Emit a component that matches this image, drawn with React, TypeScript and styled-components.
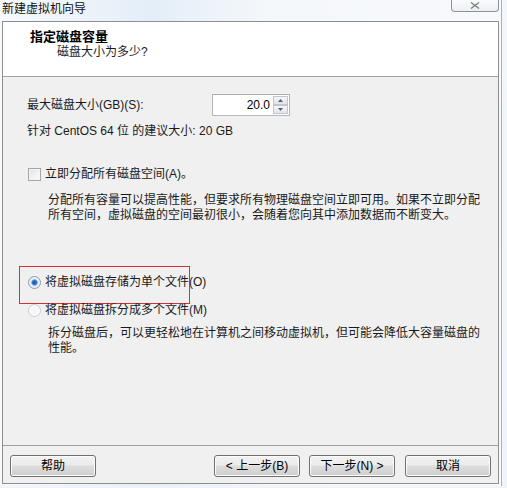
import React from "react";
import styled, { createGlobalStyle } from "styled-components";

const FONT = `"Liberation Sans", "Noto Sans CJK SC", sans-serif`;

const Global = createGlobalStyle`
  html, body { margin: 0; padding: 0; }
  body {
    background: linear-gradient(180deg, #f3f7fb 0%, #eef4fa 100%);
    font-family: ${FONT};
    font-size: 12px;
    color: #1a1a1a;
    width: 507px;
    height: 488px;
    overflow: hidden;
  }
`;

const Window = styled.div`
  width: 502px;
  height: 486px;
  display: flex;
  flex-direction: column;
  border-right: 1px solid #a9b0b8;
  box-sizing: border-box;
  background: linear-gradient(90deg, #f7f9fc 0%, #e4eef8 30%, #f5f8fb 55%, #f7f9fc 100%);
`;

const TitleBar = styled.div`
  height: 21px;
  display: flex;
  align-items: flex-start;
  justify-content: space-between;
  padding-left: 2px;
  box-sizing: border-box;
`;

const TitleText = styled.span`
  font-family: "Noto Sans CJK SC", sans-serif;
  font-size: 12px;
  line-height: 15px;
  color: #111;
`;

const CloseButton = styled.div`
  width: 46px;
  height: 11px;
  margin-right: 2px;
  border: 1px solid #8d939a;
  border-top: none;
  border-radius: 0 0 4px 4px;
  background: linear-gradient(180deg, #fbfbfb, #eceff2);
  display: flex;
  align-items: center;
  justify-content: center;
`;

const Frame = styled.div`
  flex: 1;
  margin: 0 2px 2px 2px;
  border: 1px solid #8e8f8f;
  display: flex;
  flex-direction: column;
  background: #f0f0f0;
`;

const Header = styled.div`
  height: 55px;
  background: #fff;
  border-bottom: 1px solid #a0a0a0;
  box-sizing: border-box;
  padding: 6px 0 0 27px;
  display: flex;
  flex-direction: column;
  font-family: "Noto Sans CJK SC", sans-serif;
`;

const HeaderTitle = styled.div`
  font-size: 13px;
  font-weight: bold;
  line-height: 16px;
  color: #000;
`;

const HeaderSub = styled.div`
  font-family: ${FONT};
  font-size: 12px;
  line-height: 15px;
  padding-left: 27px;
  margin-top: 1px;
`;

const Body = styled.div`
  flex: 1;
  padding: 17px 0 0 24px;
  display: flex;
  flex-direction: column;
`;

const SizeRow = styled.div`
  display: flex;
  align-items: center;
  height: 22px;
  width: 263px;
  justify-content: space-between;
`;

const Label = styled.span`
  line-height: 15px;
`;

const SpinBox = styled.div`
  width: 78px;
  height: 22px;
  box-sizing: border-box;
  border: 1px solid #b5b8bd;
  border-top-color: #abadb3;
  background: #fff;
  display: flex;
  align-items: stretch;
`;

const SpinValue = styled.div`
  flex: 1;
  text-align: right;
  padding-right: 3px;
  line-height: 20px;
  font-size: 12px;
  color: #000;
`;

const SpinButtons = styled.div`
  width: 15px;
  display: flex;
  flex-direction: column;
  margin: 1px 1px 1px 0;
`;

const SpinButton = styled.div`
  flex: 1;
  border: 1px solid #c2c6cc;
  background: linear-gradient(180deg, #f6f6f6, #e2e4e7);
  display: flex;
  align-items: center;
  justify-content: center;
`;

const Recommend = styled.div`
  line-height: 15px;
  margin-top: 8px;
`;

const OptionRow = styled.div<{ $top: number }>`
  position: relative;
  display: flex;
  align-items: center;
  gap: 4px;
  margin-top: ${(p) => p.$top}px;
  line-height: 15px;
`;

const CheckBox = styled.div`
  width: 11px;
  height: 11px;
  border: 1px solid #a6a6a6;
  background: linear-gradient(135deg, #e2e2e2, #fdfdfd);
  box-shadow: inset 0 0 0 1px #f4f4f4;
  margin-left: 1px;
`;

const Radio = styled.div<{ $checked?: boolean }>`
  width: 11px;
  height: 11px;
  border-radius: 50%;
  border: 1px solid ${(p) => (p.$checked ? "#8a99ad" : "#c9ccd0")};
  background: ${(p) =>
    p.$checked
      ? "radial-gradient(circle, #1c4f94 0, #3d83d4 2.5px, #dde9f5 3.5px, #f4f7fa 6px)"
      : "radial-gradient(circle, #f4f4f4 0, #fbfbfb 6px)"};
  margin-left: 1px;
`;

const Desc = styled.div<{ $top: number }>`
  width: 436px;
  padding-left: 21px;
  line-height: 15px;
  margin-top: ${(p) => p.$top}px;
`;

const Annotation = styled.div`
  position: absolute;
  left: -8px;
  top: -9px;
  width: 169px;
  height: 36px;
  border: 1px solid #d8303a;
  pointer-events: none;
`;

const Footer = styled.div`
  height: 38px;
  border-top: 1px solid #a0a0a0;
  box-sizing: border-box;
  display: flex;
  align-items: flex-start;
  padding: 9px 7px 0 7px;
`;

const Button = styled.button<{ $gap?: number }>`
  width: 86px;
  height: 22px;
  margin-left: ${(p) => p.$gap ?? 0}px;
  border: 1px solid #707070;
  border-radius: 3px;
  background: linear-gradient(180deg, #f2f2f2 0%, #ebebeb 45%, #dddddd 50%, #cfcfcf 100%);
  box-shadow: inset 0 0 0 1px #fcfcfc;
  font-family: ${FONT};
  font-size: 12px;
  line-height: 18px;
  color: #000;
  padding: 0;
`;

const Spacer = styled.div`
  flex: 1;
`;

export default function App() {
  return (
    <>
      <Global />
      <Window>
        <TitleBar>
          <TitleText>新建虚拟机向导</TitleText>
          <CloseButton>
            <svg width="10" height="7" viewBox="0 0 10 7">
              <path d="M1 0.5 L9 6.5 M9 0.5 L1 6.5" stroke="#7d7d7d" strokeWidth="1.3" fill="none" />
            </svg>
          </CloseButton>
        </TitleBar>
        <Frame>
          <Header>
            <HeaderTitle>指定磁盘容量</HeaderTitle>
            <HeaderSub>磁盘大小为多少?</HeaderSub>
          </Header>
          <Body>
            <SizeRow>
              <Label>最大磁盘大小(GB)(S):</Label>
              <SpinBox>
                <SpinValue>20.0</SpinValue>
                <SpinButtons>
                  <SpinButton>
                    <svg width="5" height="3" viewBox="0 0 5 3">
                      <path d="M0 3 L2.5 0 L5 3 Z" fill="#4d6185" />
                    </svg>
                  </SpinButton>
                  <SpinButton>
                    <svg width="5" height="3" viewBox="0 0 5 3">
                      <path d="M0 0 L2.5 3 L5 0 Z" fill="#4d6185" />
                    </svg>
                  </SpinButton>
                </SpinButtons>
              </SpinBox>
            </SizeRow>
            <Recommend>针对 CentOS 64 位 的建议大小: 20 GB</Recommend>
            <OptionRow $top={28}>
              <CheckBox />
              <span>立即分配所有磁盘空间(A)。</span>
            </OptionRow>
            <Desc $top={11}>
              分配所有容量可以提高性能，但要求所有物理磁盘空间立即可用。如果不立即分配所有空间，虚拟磁盘的空间最初很小，会随着您向其中添加数据而不断变大。
            </Desc>
            <OptionRow $top={52}>
              <Radio $checked />
              <span>将虚拟磁盘存储为单个文件(O)</span>
              <Annotation />
            </OptionRow>
            <OptionRow $top={13}>
              <Radio />
              <span>将虚拟磁盘拆分成多个文件(M)</span>
            </OptionRow>
            <Desc $top={8}>
              拆分磁盘后，可以更轻松地在计算机之间移动虚拟机，但可能会降低大容量磁盘的性能。
            </Desc>
          </Body>
          <Footer>
            <Button>帮助</Button>
            <Spacer />
            <Button>&lt; 上一步(B)</Button>
            <Button $gap={9}>下一步(N) &gt;</Button>
            <Button $gap={10}>取消</Button>
          </Footer>
        </Frame>
      </Window>
    </>
  );
}
